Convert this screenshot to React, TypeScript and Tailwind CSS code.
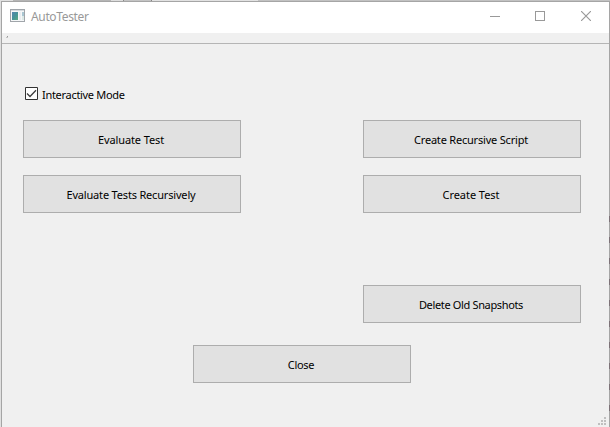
import React from "react";

function PushButton({ label, tracking }: { label: string; tracking: string }) {
  return (
    <button
      type="button"
      className={`flex h-[38px] w-[218px] items-center justify-center border border-[#adadad] bg-[#e1e1e1] pr-[2px] pt-[2px] text-[11px] leading-[14px] text-black ${tracking}`}
    >
      <span className="whitespace-nowrap">{label}</span>
    </button>
  );
}

function AppIcon() {
  return (
    <svg width="15" height="14" viewBox="0 0 15 14" shapeRendering="crispEdges" className="-mt-[3px]">
      <defs>
        <linearGradient id="pane" x1="0" y1="0" x2="1" y2="1">
          <stop offset="0" stopColor="#5585b0" />
          <stop offset="0.5" stopColor="#459399" />
          <stop offset="1" stopColor="#5aaa80" />
        </linearGradient>
      </defs>
      <path d="M0 0h15v13H0z" fill="#a0a5aa" />
      <path d="M1 1h13v1H1z" fill="#d5dade" />
      <path d="M1 2h13v10H1z" fill="#f5f7f8" />
      <path d="M2 3h6v8H2z" fill="url(#pane)" />
      <path d="M9 3h2v8H9z" fill="#e9edf0" />
      <path d="M12 3h2v4h-2z" fill="#a9c6d2" />
      <path d="M12 7h2v4h-2z" fill="#dce9e6" />
    </svg>
  );
}

function TitleBar() {
  return (
    <header className="flex h-[31px] shrink-0 items-center bg-white pl-2">
      <AppIcon />
      <h1 className="-mt-px ml-1.5 font-['Noto_Sans',sans-serif] text-[12px] leading-4 tracking-[-0.35px] text-[#999999]">
        AutoTester
      </h1>
      <div className="-mt-[3px] ml-auto mr-[18px] flex items-center text-[#999999]">
        <svg width="10" height="10" shapeRendering="crispEdges" className="mr-[35px]">
          <path d="M0 5h10v1H0z" fill="currentColor" />
        </svg>
        <svg width="10" height="10" shapeRendering="crispEdges" className="mr-9">
          <path d="M.5.5h9v9h-9z" fill="none" stroke="currentColor" />
        </svg>
        <svg width="10" height="10">
          <path d="M0 0l10 10M10 0L0 10" fill="none" stroke="currentColor" strokeWidth="1.15" />
        </svg>
      </div>
    </header>
  );
}

function SizeGrip() {
  return (
    <svg width="8" height="8" shapeRendering="crispEdges" className="absolute bottom-[2px] right-[3px]">
      <path d="M6 0h2v2H6zM3 3h2v2H3zM6 3h2v2H6zM0 6h2v2H0zM3 6h2v2H3zM6 6h2v2H6z" fill="#bfbfbf" />
    </svg>
  );
}

/* Marks of the window behind, showing through the translucent right border. */
function EdgeMarks() {
  return (
    <svg width="1" height="216" shapeRendering="crispEdges" className="absolute -right-px bottom-0">
      {[5, 26, 47, 68, 89, 110, 131, 152, 173, 194].map((y) => (
        <path key={y} d={`M0 ${y}h1v6H0z`} fill="#7d7278" />
      ))}
    </svg>
  );
}

export default function App() {
  return (
    <div className="flex h-[427px] w-[610px] flex-col overflow-hidden bg-[#e0e0e0] font-['Noto_Sans',sans-serif]">
      <div className="flex h-px shrink-0">
        <div className="w-[13px] bg-[#e0e0e0]" />
        <div className="w-[98px] bg-[#b5b5b5]" />
        <div className="w-[12px] bg-[#dedede]" />
        <div className="w-px bg-[#8b8b8b]" />
        <div className="w-[27px] bg-[#c4c4c4]" />
        <div className="w-px bg-[#858585]" />
        <div className="w-[106px] bg-[#e2e2e2]" />
        <div className="flex-1 bg-[#c2c2c2]" />
      </div>
      <div className="relative ml-px flex flex-1 flex-col border-l border-r border-t border-[#a5a5a5] bg-[#f0f0f0]">
        <TitleBar />
        <div className="h-[11px] shrink-0 border-b border-[#b5b5b5] pl-1 pt-[3px]">
          <svg width="3" height="3" shapeRendering="crispEdges">
            <path d="M1 0h1v1H1z" fill="#999" />
            <path d="M0 1h2v1H0z" fill="#c4c4c4" />
          </svg>
        </div>
        <main className="flex flex-col pl-[21px] pr-[28px] pt-[43px]">
          <label className="flex h-[14px] items-center pl-[2px]">
            <input type="checkbox" defaultChecked className="sr-only" />
            <svg width="13" height="13" viewBox="0 0 13 13" className="-mt-px">
              <path d="M.5.5h12v12H.5z" fill="white" stroke="#333333" />
              <path d="M2 6.5l3 3 6-6.3" fill="none" stroke="#3c3c3c" strokeWidth="1.25" />
            </svg>
            <span className="ml-1 mt-[2px] text-[11px] leading-[14px] tracking-[-0.3px] text-black">Interactive Mode</span>
          </label>
          <div className="mt-[19px] flex justify-between">
            <div className="flex flex-col gap-[17px]">
              <PushButton label="Evaluate Test" tracking="tracking-[-0.1px]" />
              <PushButton label="Evaluate Tests Recursively" tracking="tracking-[-0.18px]" />
            </div>
            <div className="flex flex-col gap-[17px]">
              <PushButton label="Create Recursive Script" tracking="tracking-[-0.2px]" />
              <PushButton label="Create Test" tracking="tracking-[-0.05px]" />
              <div className="mt-[55px]">
                <PushButton label="Delete Old Snapshots" tracking="tracking-[-0.35px]" />
              </div>
            </div>
          </div>
          <div className="mt-[22px] pl-[170px]">
            <PushButton label="Close" tracking="tracking-[-0.3px]" />
          </div>
        </main>
        <SizeGrip />
        <EdgeMarks />
      </div>
    </div>
  );
}
